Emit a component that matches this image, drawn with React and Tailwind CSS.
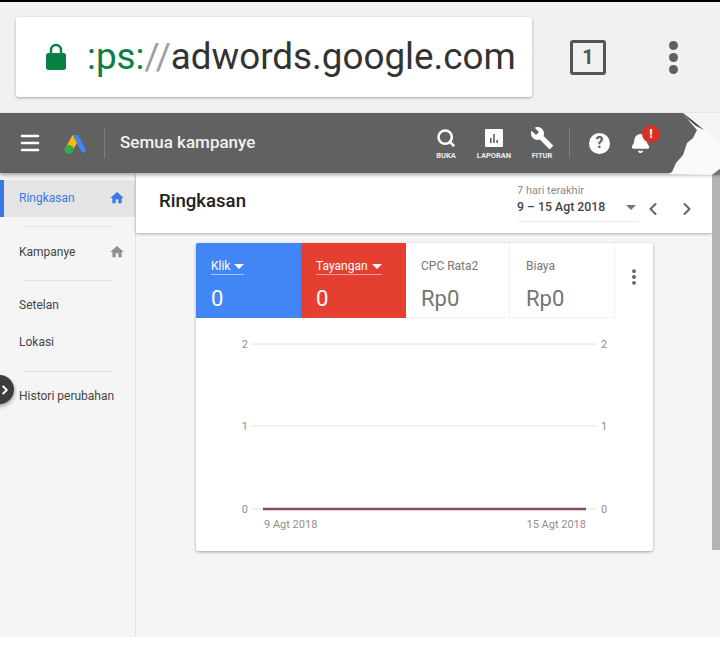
import React from 'react';
import { Menu, Search, Bell, ChevronLeft, ChevronRight, MoreVertical } from 'lucide-react';

const font = { fontFamily: 'Roboto, "Liberation Sans", sans-serif' };

const AdsLogo = () => (
    <svg width="24" height="24" viewBox="0 0 24 24">
        <path d="M9.5 4 L15 4 L23 19 C23.5 22 19.5 23 18 20 Z" fill="#4285f4" />
        <path d="M9.5 4 L14 12 L8 22 L1.5 19 Z" fill="#fbbc04" />
        <circle cx="6" cy="18.5" r="4.5" fill="#34a853" />
    </svg>
);

const ReportIcon = () => (
    <svg width="18" height="18" viewBox="0 0 18 18">
        <rect width="18" height="18" rx="1" fill="#fff" />
        <rect x="5" y="9" width="1.6" height="5" fill="#616161" />
        <rect x="8.2" y="5" width="1.6" height="9" fill="#616161" />
        <rect x="11.4" y="11" width="1.6" height="3" fill="#616161" />
    </svg>
);

const WrenchIcon = () => (
    <svg width="24" height="24" viewBox="0 0 24 24" fill="#fff">
        <path d="M22.7 19l-9.1-9.1c.9-2.3.4-5-1.5-6.9-2-2-5-2.4-7.4-1.3L9 6 6 9 1.6 4.7C.4 7.1.9 10.1 2.9 12.1c1.9 1.9 4.6 2.4 6.9 1.5l9.1 9.1c.4.4 1 .4 1.4 0l2.3-2.3c.5-.4.5-1.1.1-1.4z" />
    </svg>
);

const HomeIcon = ({ className }) => (
    <svg width="16" height="16" viewBox="0 0 24 24" fill="currentColor" className={className}>
        <path d="M10 20v-6h4v6h5v-8h3L12 3 2 12h3v8z" />
    </svg>
);

const ToolButton = ({ label, children }) => (
    <div className="flex w-12 flex-col items-center">
        <div className="flex h-[23px] items-center">{children}</div>
        <span className="mt-[3px] text-[7.5px] font-bold leading-[8px] text-[#eeeeee]">{label}</span>
    </div>
);

const NavItem = ({ label, icon, active, className }) => (
    <div className={`flex items-center justify-between pl-[19px] pr-[10px] text-[12px] ${active ? 'text-[#3b78e7]' : 'text-[#444444]'} ${className}`}>
        <span>{label}</span>
        {icon && <HomeIcon className={active ? 'text-[#3b78e7]' : 'text-[#8f8f8f]'} />}
    </div>
);

const Divider = ({ className }) => <div className={`ml-6 mr-[23px] h-px bg-[#e3e3e3] ${className}`} />;

const Metric = ({ label, value, color, line }) => (
    <div className={`flex h-[75px] w-[105px] flex-col pl-[15px] pt-[15px] ${color}`}>
        <div className="flex">
            <div className={`flex h-[17px] items-center gap-1 border-b text-[12px] leading-none ${line}`}>
                <span>{label}</span>
                <span className="h-0 w-0 border-x-[5px] border-t-[5px] border-x-transparent border-t-white" />
            </div>
        </div>
        <div className="mt-[11px] text-[22px] leading-[26px]">{value}</div>
    </div>
);

const PlainMetric = ({ label, value, className }) => (
    <div className={`flex h-[75px] w-[104px] flex-col border-r border-[#f3f3f3] pt-[17px] text-[#757575] ${className}`}>
        <div className="h-[15px] text-[12px] leading-none">{label}</div>
        <div className="mt-[11px] text-[22px] leading-[26px]">{value}</div>
    </div>
);

const Chart = () => (
    <svg width="457" height="233" viewBox="0 0 457 233" style={font}>
        {[26, 108, 191].map((y, i) => (
            <g key={y}>
                <line x1="56" x2="400" y1={y} y2={y} stroke="#e0e0e0" />
                <text x="52" y={y + 4} textAnchor="end" fontSize="11" fill="#8f8f8f">{2 - i}</text>
                <text x="405" y={y + 4} fontSize="11" fill="#8f8f8f">{2 - i}</text>
            </g>
        ))}
        <line x1="67" x2="390" y1="191" y2="191" stroke="#8a4a5c" strokeWidth="2.4" />
        <text x="68" y="210" fontSize="11" fill="#8f8f8f">9 Agt 2018</text>
        <text x="390" y="210" textAnchor="end" fontSize="11" fill="#8f8f8f">15 Agt 2018</text>
    </svg>
);

export default function App() {
    return (
        <div className="relative flex h-[649px] w-[720px] flex-col overflow-hidden bg-white" style={font}>
            {/* browser chrome */}
            <div className="h-[113px] shrink-0 border-t-2 border-black bg-[#f1f1f1]">
                <div className="flex items-center pl-4 pt-[15px]">
                    <div className="flex h-20 w-[516px] items-center overflow-hidden rounded-[3px] bg-white pl-[29px] shadow-[0_1px_3px_rgba(0,0,0,0.3)]">
                        <svg width="22" height="30" viewBox="0 0 22 30" className="shrink-0">
                            <path d="M6 13 V8 a5 5 0 0 1 10 0 V13" fill="none" stroke="#0b8043" strokeWidth="2.4" />
                            <rect x="1" y="11" width="20" height="17" rx="2.5" fill="#0b8043" />
                        </svg>
                        <div className="ml-[20px] whitespace-nowrap text-[36.8px] leading-none">
                            <span className="text-[#0b8043]">:ps:</span>
                            <span className="text-[#9e9e9e]">//</span>
                            <span className="text-[#333333]">adwords.google.com</span>
                        </div>
                    </div>
                    <div className="ml-[38px] flex h-[35px] w-[36px] items-center justify-center rounded-[3px] border-[3px] border-[#555555] text-[20px] font-bold leading-none text-[#555555]">1</div>
                    <div className="ml-[63px] flex flex-col gap-[3px]">
                        <span className="h-[9px] w-[9px] rounded-full bg-[#5f5f5f]" />
                        <span className="h-[9px] w-[9px] rounded-full bg-[#5f5f5f]" />
                        <span className="h-[9px] w-[9px] rounded-full bg-[#5f5f5f]" />
                    </div>
                </div>
            </div>

            {/* adwords header */}
            <div className="relative z-10 flex h-[60px] shrink-0 items-center bg-[#616161] shadow-[0_2px_4px_rgba(0,0,0,0.35)]">
                <Menu size={24} strokeWidth={2.6} className="ml-[18px] text-white" />
                <div className="ml-[21px]"><AdsLogo /></div>
                <div className="ml-[17px] h-[30px] w-px bg-[#7d7d7d]" />
                <div className="ml-[15px] w-[134px] whitespace-nowrap text-[17px] font-medium text-[#f1f1f1]">Semua kampanye</div>
                <div className="ml-[168px] flex items-center">
                    <ToolButton label="BUKA"><Search size={20} strokeWidth={3} className="text-white" /></ToolButton>
                    <ToolButton label="LAPORAN"><ReportIcon /></ToolButton>
                    <ToolButton label="FITUR"><WrenchIcon /></ToolButton>
                    <div className="ml-[3px] h-[30px] w-px bg-[#7d7d7d]" />
                    <div className="ml-[19px] flex h-[21px] w-[21px] items-center justify-center rounded-full bg-white text-[16px] font-bold leading-none text-[#616161]">?</div>
                    <div className="relative ml-[20px]">
                        <Bell size={21} fill="#fff" className="text-white" />
                        <div className="absolute -right-[9px] -top-[8px] flex h-[18px] w-[18px] items-center justify-center rounded-full bg-[#d93025] text-[13px] font-bold leading-none text-white">!</div>
                    </div>
                </div>
            </div>

            {/* torn corner over the header */}
            <svg className="absolute left-[660px] top-[113px] z-20" width="60" height="64" viewBox="0 0 60 64">
                <path d="M23 0 L30 9 L37 17 L33 25 L27 30 L23 42 L16 50 L12 59 L8 61 L52 62 L60 56 L60 0 Z" fill="#fafafa" />
                <path d="M23 0 L60 0 L60 28 L43 16 Z" fill="#f4f4f4" />
                <path d="M23 0 L32 7 L44 17 L36 13 L28 6 Z" fill="#4a4a4a" />
                <path d="M52 62 L60 56 L60 62 Z" fill="#777777" />
            </svg>

            <div className="flex min-h-0 flex-1">
                {/* sidebar */}
                <div className="flex h-[464px] w-[136px] shrink-0 flex-col border-r border-[#e4e4e4] bg-[#f5f5f5] pt-[7px]">
                    <NavItem label="Ringkasan" icon active className="h-[37px] border-l-[4px] border-[#3b78e7] !pl-[15px] bg-[#e4e4e4] pb-[2px]" />
                    <Divider className="mt-[9px]" />
                    <NavItem label="Kampanye" icon className="mt-[7px] h-[36px]" />
                    <Divider className="mt-[10px]" />
                    <NavItem label="Setelan" className="mt-[6px] h-[36px]" />
                    <NavItem label="Lokasi" className="mt-px h-[36px]" />
                    <Divider className="mt-[11px]" />
                    <NavItem label="Histori perubahan" className="mt-[6px] h-[36px] whitespace-nowrap" />
                </div>

                {/* main */}
                <div className="h-[464px] flex-1 bg-[#f5f5f5]">
                    <div className="flex h-[60px] w-[576px] items-center justify-between bg-white pl-[23px] shadow-[0_1px_3px_rgba(0,0,0,0.3)]">
                        <h1 className="-mt-[2px] text-[18.6px] font-medium text-[#212121]">Ringkasan</h1>
                        <div className="flex items-center">
                            <div className="w-[122px] border-b border-[#eeeeee] pb-[6px]">
                                <div className="text-[11px] leading-[13px] text-[#8a8a8a]">7 hari terakhir</div>
                                <div className="mt-[2px] flex items-center justify-between pr-[3px] text-[12.3px] font-medium leading-[16px] text-[#444444]">
                                    <span>9 – 15 Agt 2018</span>
                                    <span className="h-0 w-0 border-x-[5px] border-t-[5px] border-x-transparent border-t-[#757575]" />
                                </div>
                            </div>
                            <ChevronLeft size={20} strokeWidth={2.5} className="ml-[4px] mt-[12px] text-[#666666]" />
                            <ChevronRight size={20} strokeWidth={2.5} className="ml-[14px] mr-[15px] mt-[12px] text-[#666666]" />
                        </div>
                    </div>

                    <div className="ml-[60px] mt-[10px] h-[308px] w-[457px] overflow-hidden rounded-[2px] bg-white shadow-[0_1px_3px_rgba(0,0,0,0.35)]">
                        <div className="flex">
                            <Metric label="Klik" value="0" color="bg-[#4285f4] text-white" line="border-[#a9c7fa]" />
                            <Metric label="Tayangan" value="0" color="bg-[#e53f32] text-white" line="border-[#f2a19b]" />
                            <PlainMetric label="CPC Rata2" value="Rp0" className="border-b pl-[15px]" />
                            <PlainMetric label="Biaya" value="Rp0" className="w-[105px] border-b pl-[16px]" />
                            <div className="flex flex-1 justify-center pt-[24px] text-[#616161]">
                                <MoreVertical size={20} strokeWidth={2.6} />
                            </div>
                        </div>
                        <Chart />
                    </div>
                </div>
            </div>

            {/* scrollbar thumb */}
            <div className="absolute left-[712px] top-[175px] h-[375px] w-2 bg-[#b4b4b4]" />

            {/* floating expand button */}
            <div className="absolute -left-[15px] top-[375px] z-20 flex h-[29px] w-[29px] items-center justify-end rounded-full bg-[#3c3c3c] shadow-[0_2px_4px_rgba(0,0,0,0.4)]">
                <ChevronRight size={14} strokeWidth={3.5} className="mr-[2px] text-white" />
            </div>
        </div>
    );
}
